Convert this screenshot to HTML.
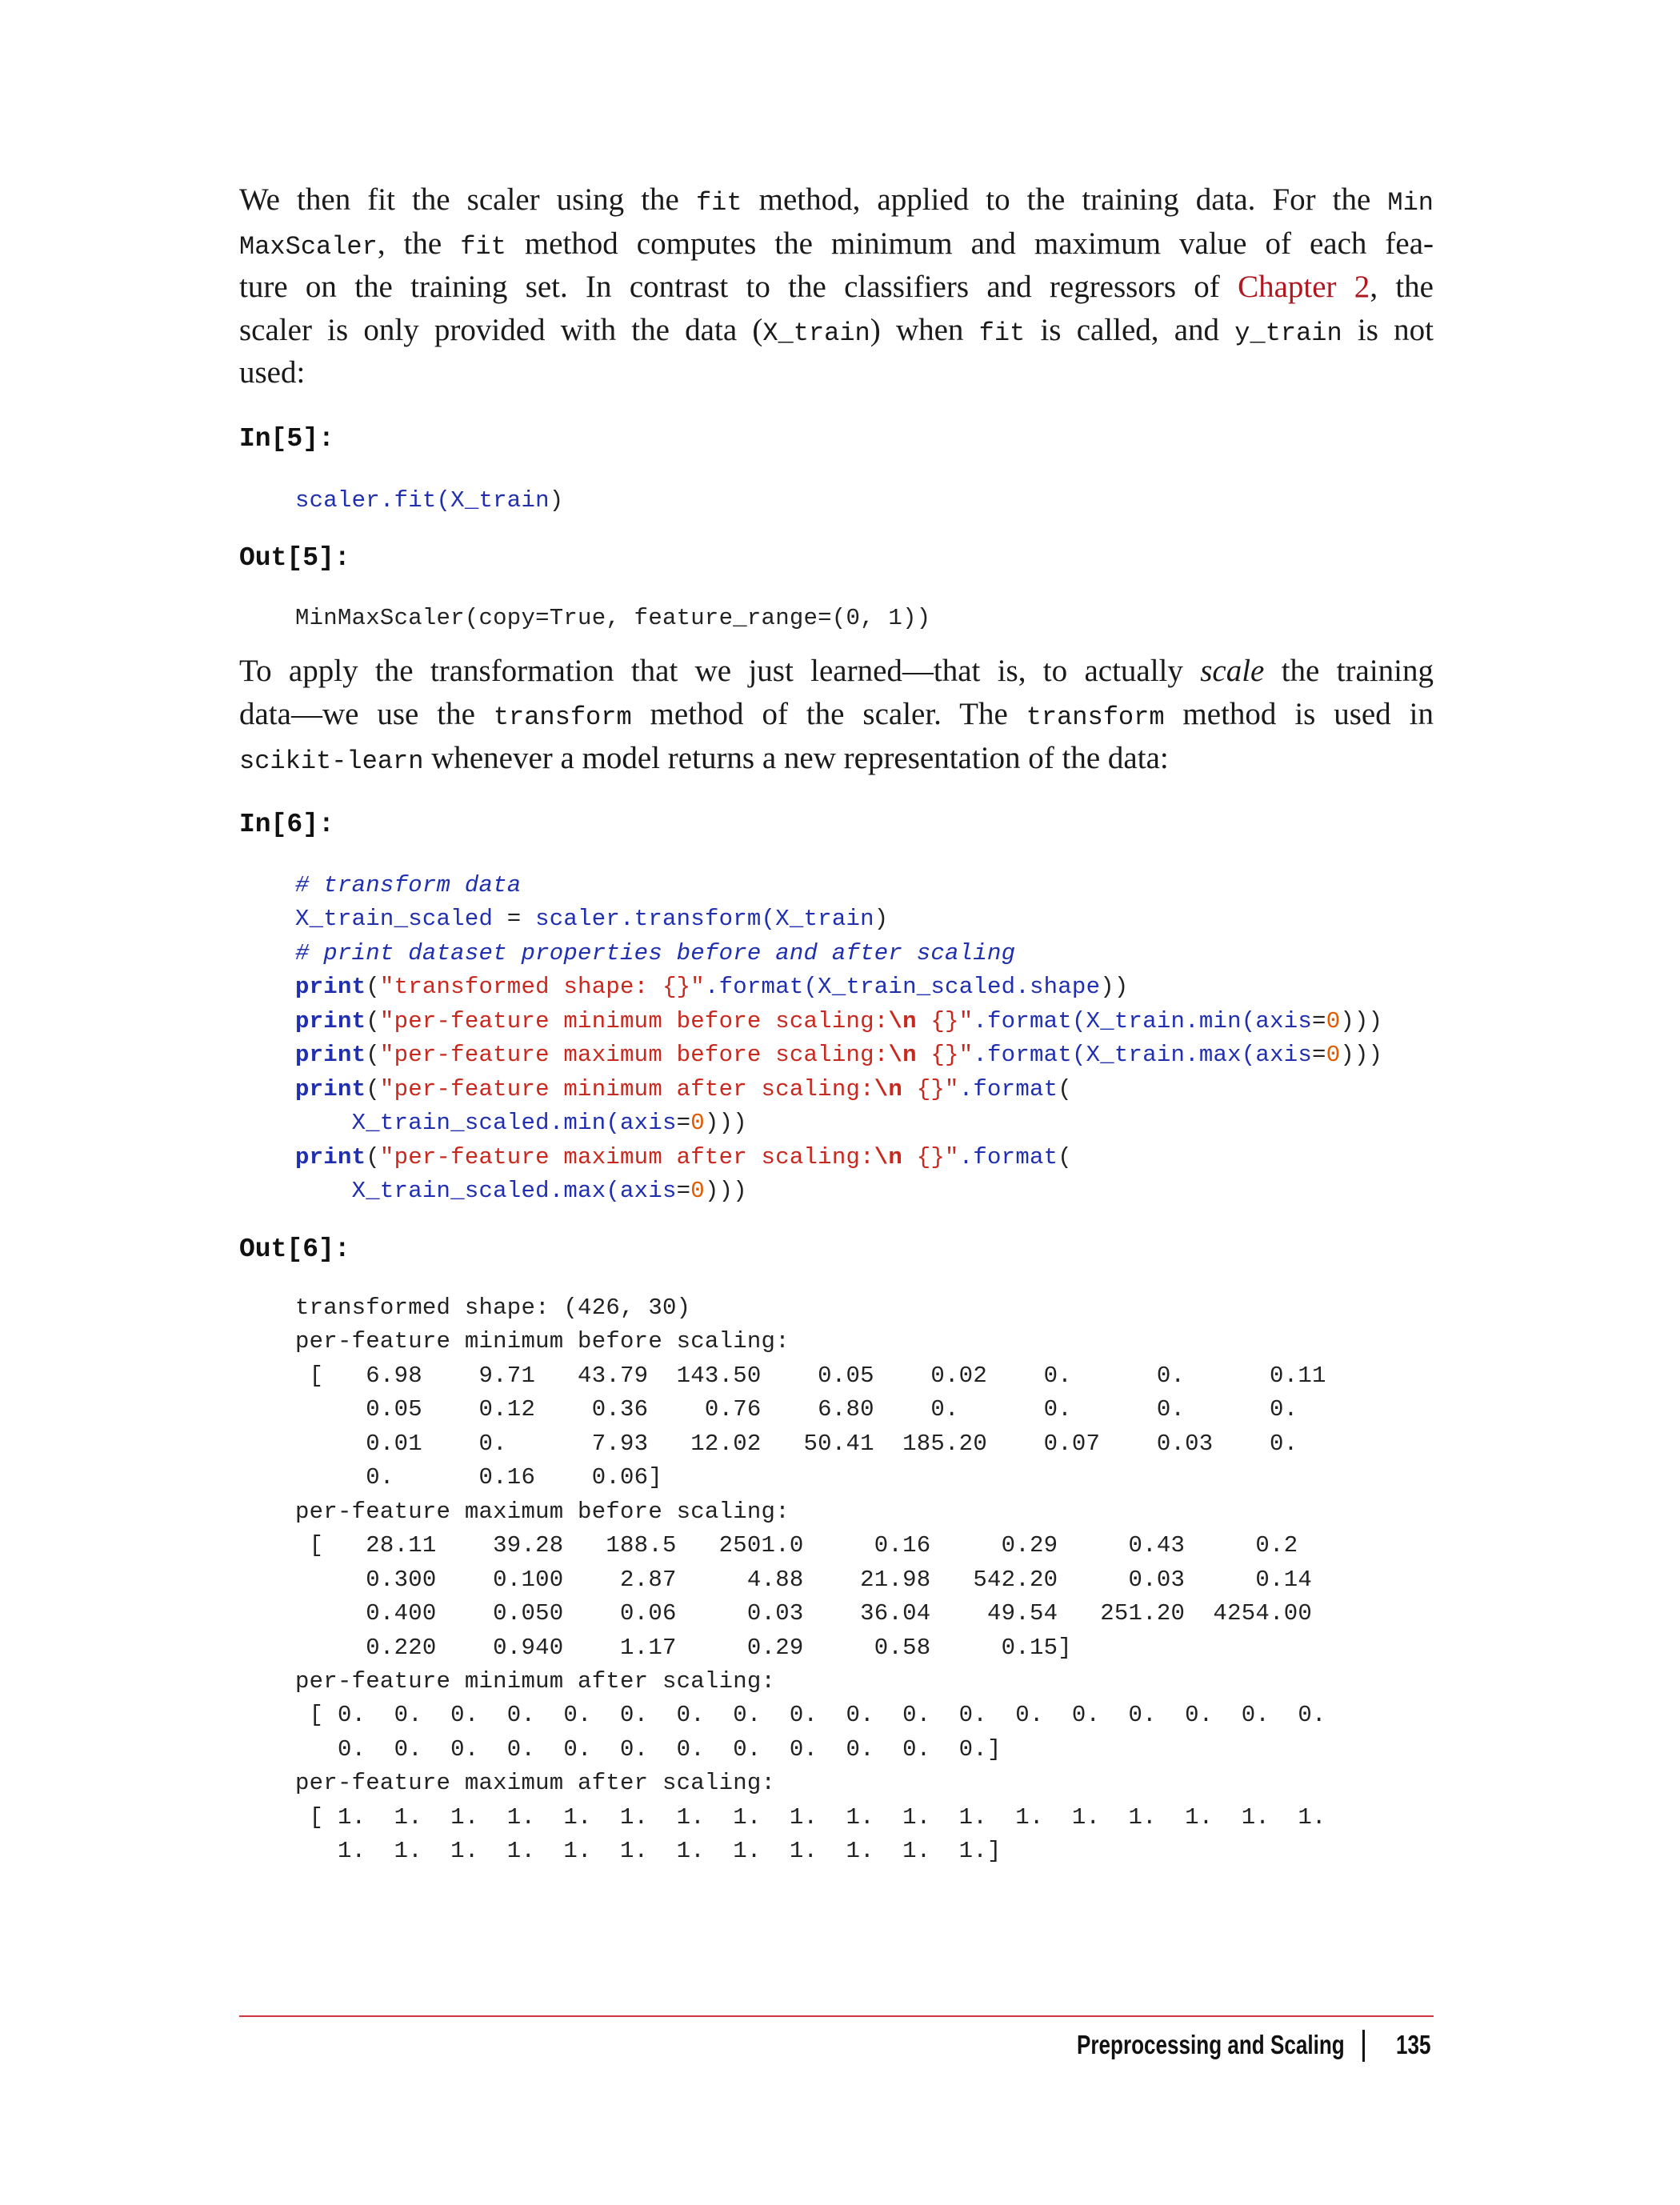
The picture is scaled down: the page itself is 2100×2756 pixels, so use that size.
<!DOCTYPE html>
<html><head><meta charset="utf-8"><style>
body{margin:0;background:#fff}
#p{position:relative;width:2100px;height:2756px;background:#fff;overflow:hidden}
.t{position:absolute;left:299px;width:1493px;font-family:"Liberation Serif",serif;font-size:39px;line-height:54px;height:54px;color:#1a1a1a;text-align:justify;text-align-last:justify;white-space:nowrap}
.t.l{text-align-last:left}
.t tt,.t code{font-family:"Liberation Mono",monospace;font-size:32px}
.h{position:absolute;left:299px;font-family:"Liberation Mono",monospace;font-weight:bold;font-size:33px;line-height:44px;color:#111}
.c{position:absolute;left:369px;font-family:"Liberation Mono",monospace;font-size:29px;letter-spacing:0.25px;line-height:42.45px;white-space:pre;color:#222}
.b{color:#1f2fb0}.k{color:#1f2fb0;font-weight:bold}.s{color:#c8281e}.sb{color:#c8281e;font-weight:bold}.n{color:#e05a00}.cm{color:#1f2fb0;font-style:italic}
.red{color:#b0171f}
</style></head><body><div id="p">
<div class="t" style="top:223px">We then fit the scaler using the <tt>fit</tt> method, applied to the training data. For the <tt>Min</tt></div>
<div class="t" style="top:278px"><tt>MaxScaler</tt>, the <tt>fit</tt> method computes the minimum and maximum value of each fea-</div>
<div class="t" style="top:332px">ture on the training set. In contrast to the classifiers and regressors of <span class="red">Chapter 2</span>, the</div>
<div class="t" style="top:386px">scaler is only provided with the data (<tt>X_train</tt>) when <tt>fit</tt> is called, and <tt>y_train</tt> is not</div>
<div class="t l" style="top:439px">used:</div>

<div class="h" style="top:527px">In[5]:</div>
<div class="c" style="top:605px"><span class="b">scaler.fit(X_train</span>)</div>
<div class="h" style="top:676px">Out[5]:</div>
<div class="c" style="top:752px">MinMaxScaler(copy=True, feature_range=(0, 1))</div>

<div class="t" style="top:812px">To apply the transformation that we just learned—that is, to actually <i>scale</i> the training</div>
<div class="t" style="top:866px">data—we use the <tt>transform</tt> method of the scaler. The <tt>transform</tt> method is used in</div>
<div class="t l" style="top:921px"><tt>scikit-learn</tt> whenever a model returns a new representation of the data:</div>

<div class="h" style="top:1009px">In[6]:</div>
<div class="c" style="top:1086px"><span class="cm"># transform data</span>
<span class="b">X_train_scaled</span> = <span class="b">scaler.transform(X_train</span>)
<span class="cm"># print dataset properties before and after scaling</span>
<span class="k">print</span>(<span class="s">"transformed shape: {}"</span><span class="b">.format(X_train_scaled.shape</span>))
<span class="k">print</span>(<span class="s">"per-feature minimum before scaling:</span><span class="sb">\n</span><span class="s"> {}"</span><span class="b">.format(X_train.min(axis</span>=<span class="n">0</span>)))
<span class="k">print</span>(<span class="s">"per-feature maximum before scaling:</span><span class="sb">\n</span><span class="s"> {}"</span><span class="b">.format(X_train.max(axis</span>=<span class="n">0</span>)))
<span class="k">print</span>(<span class="s">"per-feature minimum after scaling:</span><span class="sb">\n</span><span class="s"> {}"</span><span class="b">.format</span>(
    <span class="b">X_train_scaled.min(axis</span>=<span class="n">0</span>)))
<span class="k">print</span>(<span class="s">"per-feature maximum after scaling:</span><span class="sb">\n</span><span class="s"> {}"</span><span class="b">.format</span>(
    <span class="b">X_train_scaled.max(axis</span>=<span class="n">0</span>)))</div>

<div class="h" style="top:1540px">Out[6]:</div>
<div class="c" style="top:1614px">transformed shape: (426, 30)
per-feature minimum before scaling:
 [   6.98    9.71   43.79  143.50    0.05    0.02    0.      0.      0.11
     0.05    0.12    0.36    0.76    6.80    0.      0.      0.      0.
     0.01    0.      7.93   12.02   50.41  185.20    0.07    0.03    0.
     0.      0.16    0.06]
per-feature maximum before scaling:
 [   28.11    39.28   188.5   2501.0     0.16     0.29     0.43     0.2
     0.300    0.100    2.87     4.88    21.98   542.20     0.03     0.14
     0.400    0.050    0.06     0.03    36.04    49.54   251.20  4254.00
     0.220    0.940    1.17     0.29     0.58     0.15]
per-feature minimum after scaling:
 [ 0.  0.  0.  0.  0.  0.  0.  0.  0.  0.  0.  0.  0.  0.  0.  0.  0.  0.
   0.  0.  0.  0.  0.  0.  0.  0.  0.  0.  0.  0.]
per-feature maximum after scaling:
 [ 1.  1.  1.  1.  1.  1.  1.  1.  1.  1.  1.  1.  1.  1.  1.  1.  1.  1.
   1.  1.  1.  1.  1.  1.  1.  1.  1.  1.  1.  1.]</div>

<div style="position:absolute;left:299px;top:2519px;width:1493px;height:2px;background:#d9333b"></div>
<div style="position:absolute;left:1346px;top:2534px;width:318px;height:44px;font-family:'Liberation Sans',sans-serif;font-weight:bold;font-size:33px;line-height:44px;color:#111;white-space:nowrap;transform:scaleX(0.79);transform-origin:0 0">Preprocessing and Scaling</div>
<div style="position:absolute;left:1703px;top:2537px;width:3px;height:40px;background:#111"></div>
<div style="position:absolute;left:1745px;top:2534px;width:60px;height:44px;font-family:'Liberation Sans',sans-serif;font-weight:bold;font-size:33px;line-height:44px;color:#111;white-space:nowrap;transform:scaleX(0.79);transform-origin:0 0">135</div>
</div></body></html>
